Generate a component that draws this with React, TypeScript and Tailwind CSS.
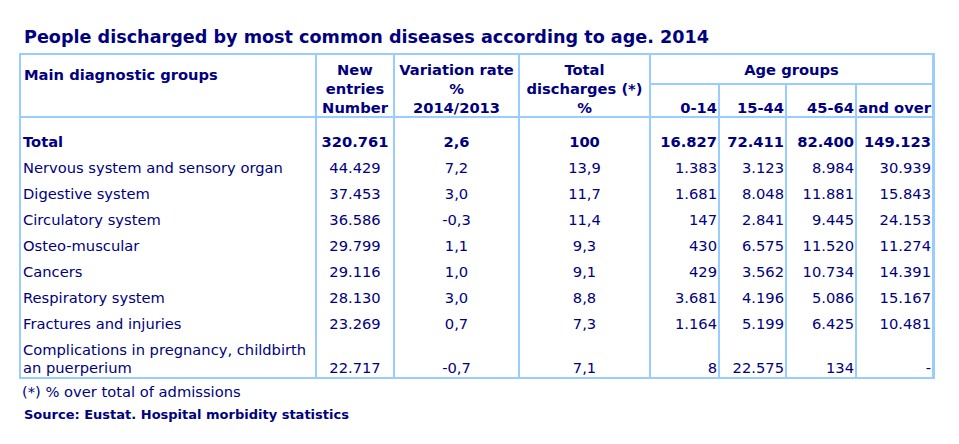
import React from "react";

const COLS = "grid grid-cols-[296px_78px_125px_131px_69px_67px_70px_75px]";

type Row = { cells: string[]; bold?: boolean; first?: boolean; last?: boolean };

const rows: Row[] = [
  { cells: ["Total", "320.761", "2,6", "100", "16.827", "72.411", "82.400", "149.123"], bold: true, first: true },
  { cells: ["Nervous system and sensory organ", "44.429", "7,2", "13,9", "1.383", "3.123", "8.984", "30.939"] },
  { cells: ["Digestive system", "37.453", "3,0", "11,7", "1.681", "8.048", "11.881", "15.843"] },
  { cells: ["Circulatory system", "36.586", "-0,3", "11,4", "147", "2.841", "9.445", "24.153"] },
  { cells: ["Osteo-muscular", "29.799", "1,1", "9,3", "430", "6.575", "11.520", "11.274"] },
  { cells: ["Cancers", "29.116", "1,0", "9,1", "429", "3.562", "10.734", "14.391"] },
  { cells: ["Respiratory system", "28.130", "3,0", "8,8", "3.681", "4.196", "5.086", "15.167"] },
  { cells: ["Fractures and injuries", "23.269", "0,7", "7,3", "1.164", "5.199", "6.425", "10.481"] },
  { cells: ["Complications in pregnancy, childbirth\nan puerperium", "22.717", "-0,7", "7,1", "8", "22.575", "134", "-"], last: true },
];

function BodyRow({ row }: { row: Row }) {
  const pad = row.first ? "pt-[15px]" : "pt-[8px]";
  const weight = row.bold ? "font-bold" : "font-normal";
  const [label, ...nums] = row.cells;
  return (
    <div className={`${COLS} ${weight}`}>
      <div className={`${pad} border-r-2 border-[#99ccff] pl-[2px] flex flex-col justify-end whitespace-pre`}>
        {label}
      </div>
      {nums.map((n, i) => {
        const align = i < 3 ? "justify-center text-center" : "justify-end text-right pr-[1px]";
        const border = i === 6 ? "" : "border-r-2 border-[#99ccff]";
        return (
          <div key={i} className={`${pad} ${border} flex items-end ${align} whitespace-nowrap`}>
            {n}
          </div>
        );
      })}
    </div>
  );
}

export default function App() {
  return (
    <div className="w-[959px] h-[444px] bg-white pt-[25px] pl-[19px] font-['DejaVu_Sans',sans-serif] text-[#000080] text-[14.7px] leading-[18px]">
      <div className="pl-[5px] text-[17.6px] leading-[24px] font-bold whitespace-nowrap">
        People discharged by most common diseases according to age. 2014
      </div>
      <div className="mt-[4px] w-[916px] border-l-2 border-t-2 border-b-2 border-r-[3px] border-[#99ccff]">
        <div className={`${COLS} grid-rows-[30px_31px] border-b-2 border-[#99ccff] font-bold leading-[19px]`}>
          <div className="row-span-2 border-r-2 border-[#99ccff] pl-[3px] pt-[10px] whitespace-nowrap">
            Main diagnostic groups
          </div>
          <div className="row-span-2 border-r-2 border-[#99ccff] pt-[5px] text-center whitespace-nowrap">
            New
            <br />
            entries
            <br />
            Number
          </div>
          <div className="row-span-2 border-r-2 border-[#99ccff] pt-[5px] text-center whitespace-nowrap">
            Variation rate
            <br />%<br />
            2014/2013
          </div>
          <div className="row-span-2 border-r-2 border-[#99ccff] pt-[5px] text-center whitespace-nowrap">
            Total
            <br />
            discharges (*)
            <br />%
          </div>
          <div className="col-span-4 border-b-2 border-[#99ccff] pt-[5px] text-center whitespace-nowrap">
            Age groups
          </div>
          <div className="border-r-2 border-[#99ccff] pt-[13px] pr-[1px] text-right whitespace-nowrap">0-14</div>
          <div className="border-r-2 border-[#99ccff] pt-[13px] pr-[1px] text-right whitespace-nowrap">15-44</div>
          <div className="border-r-2 border-[#99ccff] pt-[13px] pr-[1px] text-right whitespace-nowrap">45-64</div>
          <div className="pt-[13px] pr-[1px] text-right whitespace-nowrap">and over</div>
        </div>
        <div className="flex flex-col">
          {rows.map((r, i) => (
            <BodyRow key={i} row={r} />
          ))}
        </div>
      </div>
      <div className="mt-[4px] pl-[3px] whitespace-nowrap">(*) % over total of admissions</div>
      <div className="mt-[5px] pl-[5px] text-[13px] font-bold whitespace-nowrap">
        Source: Eustat. Hospital morbidity statistics
      </div>
    </div>
  );
}
